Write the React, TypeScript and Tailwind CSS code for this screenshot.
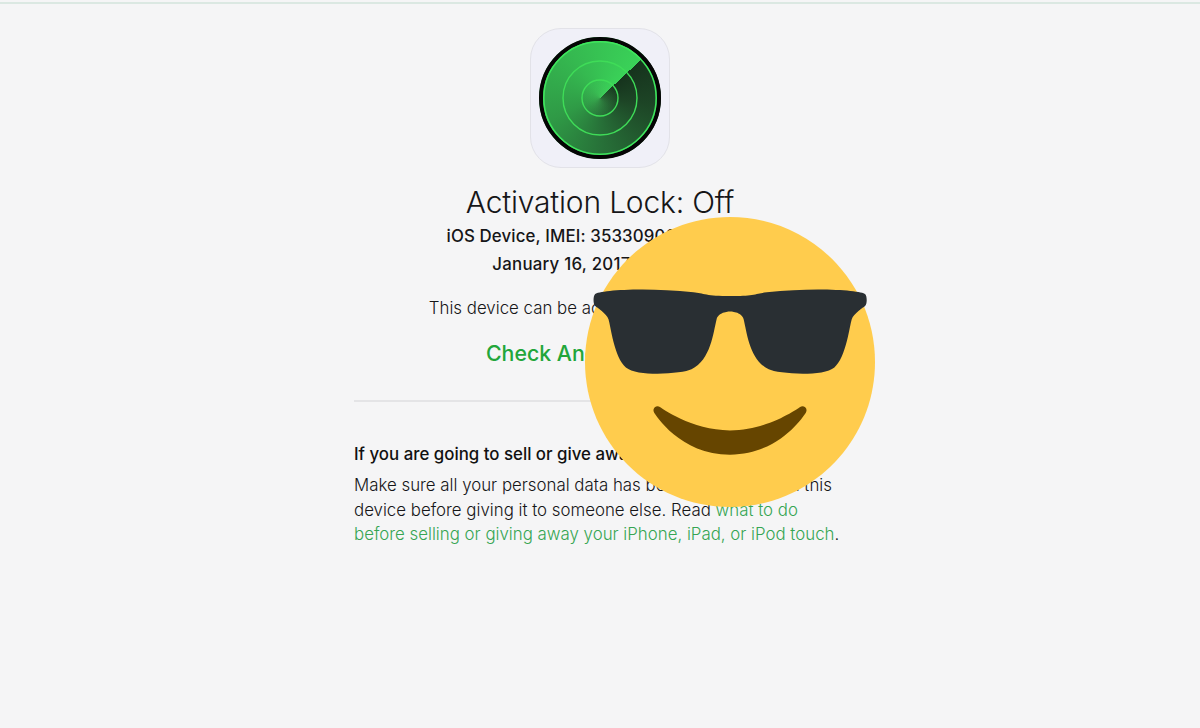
export default function App() {
  return (
    <div className="relative min-h-[728px] overflow-hidden bg-[#f5f5f6] pt-[2px] font-['Inter',sans-serif] text-[#161618]">
      <div className="h-[2px] bg-[#dbe8e2]" />
      <main className="flex flex-col items-center pt-[24px]">
        <RadarIcon />
        <h1 className="mt-[15px] text-[30px] leading-[38px] font-light tracking-[-0.2px]">Activation Lock: Off</h1>
        <p className="mt-[1px] text-[16.85px] leading-[28px] font-medium tracking-[0.12px]">iOS Device, IMEI: 353309000000000</p>
        <p className="text-[16.85px] leading-[28px] font-medium tracking-[0.24px]">January 16, 2017 11:22 PM</p>
        <p className="mt-[16px] text-[16.85px] leading-[28px] font-light">This device can be activated by a new user.</p>
        <a className="mt-[16px] text-[21.3px] leading-[30px] font-medium text-[#22a63a]">Check Another Device</a>
        <hr className="mt-[32px] h-[2px] w-[492px] border-0 bg-[#e4e4e6]" />
        <section className="mt-[39px] w-[492px] pr-[6px]">
          <h2 className="text-[16.85px] leading-[26px] font-medium text-[#111]">If you are going to sell or give away this device</h2>
          <p className="mt-[6px] text-[16.85px] leading-[24.7px] font-light">
            Make sure all your personal data has been removed from this device before giving it to someone else. Read{' '}
            <a className="text-[#36a553]">what to do before selling or giving away your iPhone, iPad, or iPod touch</a>.
          </p>
        </section>
      </main>
      <CoolEmoji />
    </div>
  )
}

function RadarIcon() {
  return (
    <div className="flex h-[140px] w-[140px] items-center justify-center rounded-[31px] border border-[#e2e2e8] bg-[#f0f0f8]">
      <div className="relative h-[122px] w-[122px] rounded-full bg-[conic-gradient(from_47deg,#16331d_0deg,#1d4526_50deg,#277038_130deg,#2f9a46_200deg,#35b950_280deg,#3ad158_359deg)]">
        <div className="absolute inset-[42px] rounded-full bg-[radial-gradient(circle,rgba(70,190,90,0.35),transparent_70%)]" />
        <svg viewBox="0 0 122 122" className="absolute inset-0 h-full w-full" fill="none">
          <circle cx="61" cy="61" r="59" stroke="#050505" strokeWidth="4" />
          <circle cx="61" cy="61" r="56.2" stroke="#3ee65c" strokeWidth="1.6" />
          <circle cx="61" cy="61" r="37" stroke="#3fdc58" strokeWidth="1.4" />
          <circle cx="61" cy="61" r="18" stroke="#3fdc58" strokeWidth="1.4" />
        </svg>
      </div>
    </div>
  )
}

function CoolEmoji() {
  return (
    <svg viewBox="0 0 36 36" className="absolute top-[217px] left-[585px] h-[290px] w-[290px]">
      <path fill="#FFCC4D" d="M36 18c0 9.941-8.059 18-18 18-9.94 0-18-8.059-18-18C0 8.06 8.06 0 18 0c9.941 0 18 8.06 18 18" />
      <path fill="#292F33" d="M1.24 11.018c.24.239 1.438.957 1.677 1.675.24.717.72 4.784 2.158 5.981 1.483 1.232 7.077.774 8.148.24 2.397-1.195 2.691-4.531 3.115-6.221.239-.957 1.677-.957 1.677-.957s1.438 0 1.678.956c.424 1.691.72 5.027 3.115 6.221 1.072.535 6.666.994 8.151-.238 1.436-1.197 1.915-5.264 2.155-5.982.238-.717 1.438-1.435 1.677-1.674.24-.239.24-1.196 0-1.436-.479-.478-6.134-.904-12.223-.239-1.215.133-1.677.478-4.554.478-2.875 0-3.339-.346-4.553-.478-6.085-.664-11.741-.238-12.221.239-.239.239-.239 1.197 0 1.436z" />
      <path fill="#664500" d="M27.335 23.629c-.178-.161-.444-.171-.635-.029-.039.029-3.922 2.9-8.7 2.9-4.766 0-8.662-2.871-8.7-2.9-.191-.142-.457-.13-.635.029-.177.16-.217.424-.094.628C8.7 24.472 11.788 29.5 18 29.5s9.301-5.028 9.429-5.243c.123-.205.084-.468-.094-.628z" />
    </svg>
  )
}
